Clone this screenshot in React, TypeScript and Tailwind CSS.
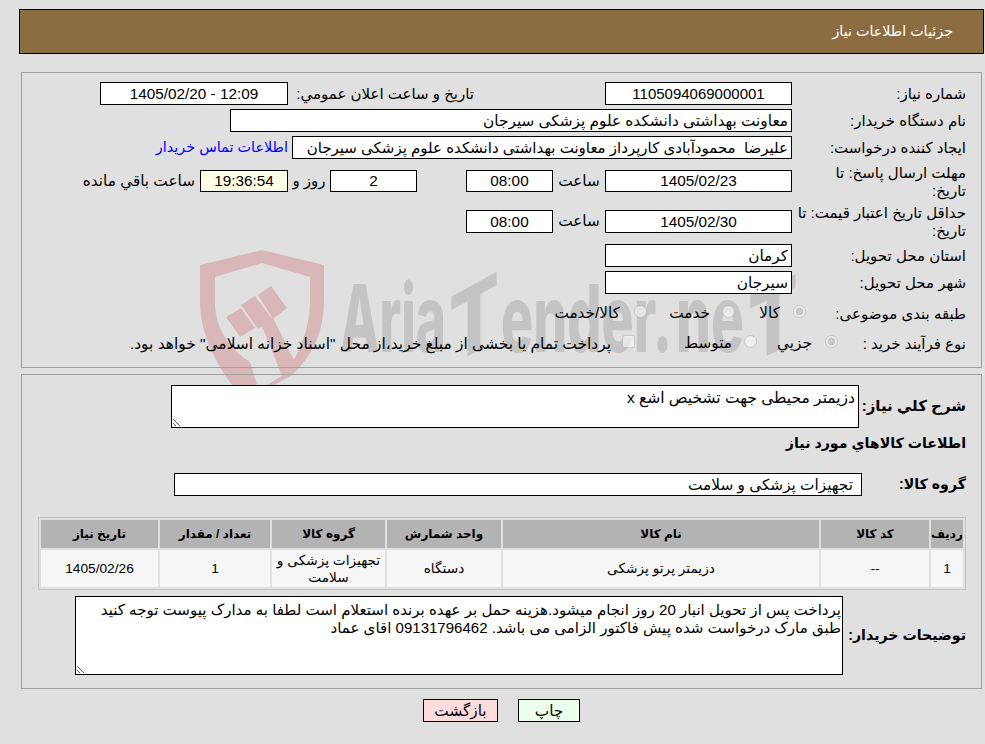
const inputCls = "h-[23px] border border-black outline-none px-[3px]"

function Label({ children, className = "" }: { children: React.ReactNode; className?: string }) {
  return <div className={`shrink-0 text-[15px] leading-[18px] ${className}`}>{children}</div>
}

function Box({ value, className = "" }: { value: string; className?: string }) {
  return <input readOnly dir="ltr" value={value} className={`${inputCls} bg-white shrink-0 text-center ${className}`} />
}

function Watermark() {
  return (
    <svg className="absolute left-0 top-0 z-0" width="985" height="400" viewBox="0 0 985 400">
      <path
        fillRule="evenodd"
        fill="#d9b7b9"
        d="M200 265 L262 250 L324 265 L324 300 C324 335 310 358 292 375 L262 392 L232 385 C212 358 200 330 200 300 Z M215 277 L215 305 C216 328 228 348 250 362 L257 385 L262 388 L282 376 C298 358 310 330 310 300 L310 277 L262 263 Z"
      />
      <g fill="#d9b7b9">
        <polygon points="226,317 241,308 255,328 240,337" />
        <polygon points="241,305 255,296 273,320 258,329" />
        <polygon points="258,295 271,286 287,308 273,319" />
        <polygon points="261,324 273,318 297,366 283,378" />
      </g>
      <g direction="ltr" fontFamily="Inter, sans-serif" fontWeight="800" fontSize="94" fill="#c4c4c4">
        <text x="340" y="352" textLength="106" lengthAdjust="spacingAndGlyphs">Aria</text>
        <text x="449" y="352" textLength="50" lengthAdjust="spacingAndGlyphs" transform="translate(475 0) skewY(-29) translate(-475 0)">T</text>
        <text x="501" y="352" textLength="171" lengthAdjust="spacingAndGlyphs">ender.</text>
        <text x="676" y="352" textLength="68" lengthAdjust="spacingAndGlyphs">ne</text>
        <text x="748" y="352" textLength="50" lengthAdjust="spacingAndGlyphs" transform="translate(775 0) skewY(-25) translate(-775 0)">T</text>
      </g>
    </svg>
  )
}

export default function App() {
  return (
    <div dir="rtl" className="relative w-[985px] h-[744px] overflow-hidden bg-[#e0e0e0] pt-[9px] text-[15.3px] text-black font-['Liberation_Sans','DejaVu_Sans',sans-serif]">
      <Watermark />

      <div className="relative z-10">
        {/* Header */}
        <div className="ml-[19px] mr-px h-[45px] border border-black bg-[#8c6d42] pr-[30px] flex items-center text-[14.3px] text-white">
          جزئیات اطلاعات نیاز
        </div>

        {/* Main info */}
        <div className="ml-[21px] mr-[3px] mt-[18px] h-[296px] border border-[#a0a0a0] pt-[9px] pr-[15px] flex flex-col gap-[4px]">
          <div className="flex items-center">
            <Label className="w-[174px]">شماره نیاز:</Label>
            <Box value="1105094069000001" className="w-[187px] text-[15px]" />
            <Label className="w-[186px] mr-[131px]">تاریخ و ساعت اعلان عمومي:</Label>
            <Box value="1405/02/20 - 12:09" className="w-[188px]" />
          </div>
          <div className="flex items-center">
            <Label className="w-[174px]">نام دستگاه خریدار:</Label>
            <input readOnly value="معاونت بهداشتی دانشکده علوم پزشکی سیرجان" className={`${inputCls} bg-white w-[562px]`} />
          </div>
          <div className="flex items-center">
            <Label className="w-[174px]">ایجاد کننده درخواست:</Label>
            <input readOnly value="علیرضا  محمودآبادی کارپرداز معاونت بهداشتی دانشکده علوم پزشکی سیرجان" className={`${inputCls} bg-white w-[500px] text-[15px]`} />
            <a className="mr-[4px] text-[14.4px] text-[#0000ff]">اطلاعات تماس خریدار</a>
          </div>
          <div className="flex items-center h-[36px]">
            <Label className="w-[174px] pt-[1px]">مهلت ارسال پاسخ: تا<br />تاریخ:</Label>
            <Box value="1405/02/23" className="w-[187px] !h-[22px]" />
            <div className="w-[52px] text-center">ساعت</div>
            <Box value="08:00" className="w-[87px] !h-[22px]" />
            <Box value="2" className="w-[87px] !h-[22px] mr-[49px]" />
            <div className="w-[42px] text-center text-[15px]">روز و</div>
            <input readOnly value="19:36:54" className={`${inputCls} w-[88px] !h-[22px] text-center bg-[#ffffe8]`} />
            <div className="mr-[5px]">ساعت باقي مانده</div>
          </div>
          <div className="flex items-center h-[37px]">
            <Label className="w-[174px]">حداقل تاریخ اعتبار قیمت: تا<br />تاریخ:</Label>
            <Box value="1405/02/30" className="w-[187px]" />
            <div className="w-[52px] text-center">ساعت</div>
            <Box value="08:00" className="w-[87px]" />
          </div>
          <div className="flex items-center">
            <Label className="w-[174px]">استان محل تحویل:</Label>
            <input readOnly value="کرمان" className={`${inputCls} bg-white w-[187px]`} />
          </div>
          <div className="flex items-center">
            <Label className="w-[174px]">شهر محل تحویل:</Label>
            <input readOnly value="سیرجان" className={`${inputCls} bg-white w-[187px]`} />
          </div>
          <div className="flex items-center h-[23px] mt-[4px]">
            <Label className="w-[160px]">طبقه بندی موضوعی:</Label>
            <input type="radio" disabled defaultChecked name="cat" className="m-0 w-[13px] h-[13px] -mt-[4px]" />
            <div className="w-[45px] mr-[13px]">کالا</div>
            <input type="radio" disabled name="cat" className="m-0 w-[13px] h-[13px] -mt-[4px]" />
            <div className="w-[63px] mr-[12px]">خدمت</div>
            <input type="radio" disabled name="cat" className="m-0 w-[13px] h-[13px] -mt-[4px]" />
            <div className="mr-[14px]">کالا/خدمت</div>
          </div>
          <div className="flex items-center h-[23px] mt-[3px]">
            <Label className="w-[128px]">نوع فرآیند خرید :</Label>
            <input type="radio" disabled defaultChecked name="kind" className="m-0 w-[13px] h-[13px] -mt-[4px]" />
            <div className="w-[55px] mr-[13px]">جزیي</div>
            <input type="radio" disabled name="kind" className="m-0 w-[13px] h-[13px] -mt-[4px]" />
            <div className="w-[97px] mr-[12px]">متوسط</div>
            <input type="checkbox" disabled className="m-0 w-[13px] h-[13px] -mt-[4px]" />
            <div className="mr-[11px] whitespace-nowrap text-[15.45px]">پرداخت تمام یا بخشی از مبلغ خرید،از محل "اسناد خزانه اسلامی" خواهد بود.</div>
          </div>
        </div>

        {/* Description and items */}
        <div className="ml-[21px] mr-[3px] mt-[6px] h-[315px] border border-[#a0a0a0] pt-[10px] pr-[15px]">
          <div className="flex items-center">
            <div className="w-[107px] shrink-0 font-bold text-[15px]">شرح کلي نیاز:</div>
            <textarea readOnly value="دزیمتر محیطی جهت تشخیص اشع x" className="w-[688px] h-[43px] border border-black bg-white outline-none px-[3px] py-[3px] text-[15.5px] leading-[18px]" />
          </div>
          <div className="h-[30px] mt-px flex items-center font-bold text-[14.2px]">اطلاعات کالاهاي مورد نیاز</div>
          <div className="flex items-center mt-[14px]">
            <div className="w-[104px] shrink-0 font-bold text-[14.2px]">گروه کالا:</div>
            <input readOnly value="تجهیزات پزشکی و سلامت" className="w-[688px] h-[23px] border border-black bg-white outline-none pr-[8px] pl-[3px]" />
          </div>

          <table className="mt-[21px] w-[928px] table-fixed border border-[#c4c4c4] border-separate border-spacing-[2px] text-center text-[13.7px]">
            <colgroup>
              <col className="w-[32px]" />
              <col className="w-[108px]" />
              <col className="w-[316px]" />
              <col className="w-[114px]" />
              <col className="w-[113px]" />
              <col className="w-[110px]" />
              <col className="w-[117px]" />
            </colgroup>
            <thead>
              <tr className="h-[28px] bg-[#b3b3b3] font-bold text-[12px]">
                <th>ردیف</th>
                <th>کد کالا</th>
                <th>نام کالا</th>
                <th>واحد شمارش</th>
                <th>گروه کالا</th>
                <th>تعداد / مقدار</th>
                <th>تاریخ نیاز</th>
              </tr>
            </thead>
            <tbody>
              <tr className="h-[37px] bg-[#f6f6f6] leading-[17px]">
                <td>1</td>
                <td>--</td>
                <td>دزیمتر پرتو پزشکی</td>
                <td>دستگاه</td>
                <td>تجهیزات پزشکی و سلامت</td>
                <td>1</td>
                <td>1405/02/26</td>
              </tr>
            </tbody>
          </table>

          <div className="flex items-center mt-[6px]">
            <div className="w-[123px] shrink-0 font-bold text-[14.2px]">توضیحات خریدار:</div>
            <textarea
              readOnly
              value="پرداخت پس از تحویل انبار 20 روز انجام میشود.هزینه حمل بر عهده برنده استعلام است لطفا به مدارک پیوست توجه کنید طبق مارک درخواست شده پیش فاکتور الزامی می باشد. 09131796462 اقای عماد"
              className="w-[768px] h-[79px] border border-black bg-white outline-none pr-px pl-[2px] py-[4px] text-[15.05px] leading-[18px]"
            />
          </div>
        </div>

        {/* Actions */}
        <div className="mt-[10px] pr-[405px] flex gap-[20px]">
          <button className="w-[62px] h-[23px] border border-black bg-[#ecffec]">چاپ</button>
          <button className="w-[75px] h-[23px] border border-black bg-[#ffdcdc]">بازگشت</button>
        </div>
      </div>
    </div>
  )
}
